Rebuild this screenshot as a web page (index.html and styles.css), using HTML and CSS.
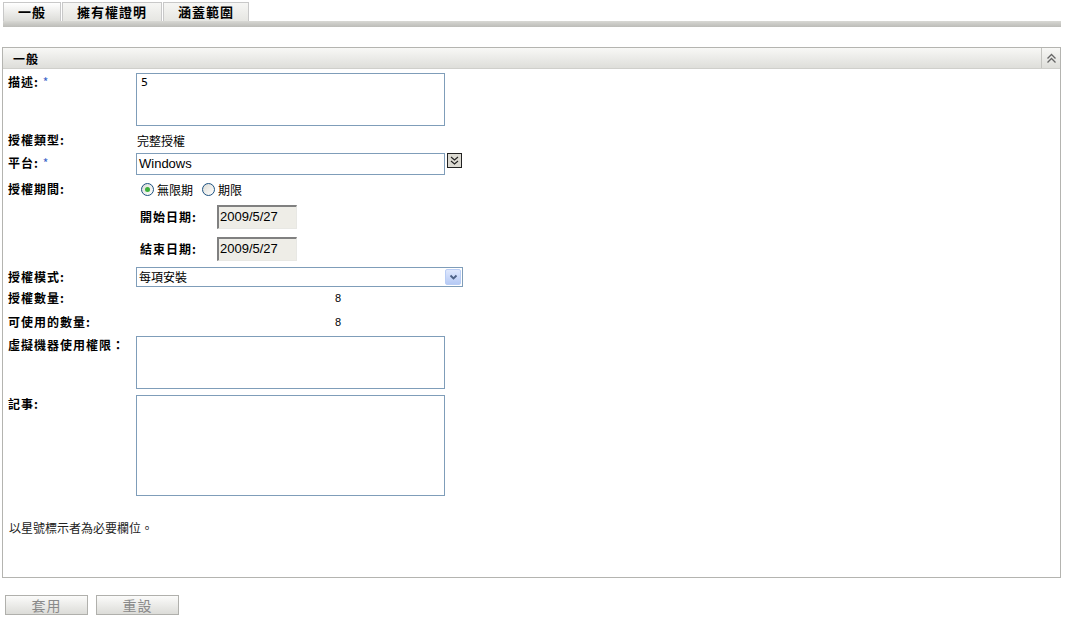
FILE: index.html
```html
<!DOCTYPE html>
<html>
<head>
<meta charset="utf-8">
<link rel="stylesheet" href="styles.css">
</head>
<body>
<div class="tabs">
  <div class="tab active t1">一般</div>
  <div class="tab t2">擁有權證明</div>
  <div class="tab t3">涵蓋範圍</div>
</div>
<div class="tabbar"></div>

<div class="panel">
  <div class="panel-head">
    <span class="panel-title">一般</span>
    <span class="collapse">
      <svg width="11" height="11" viewBox="0 0 11 11"><path d="M1.5 5.5 L5.5 1.5 L9.5 5.5 M1.5 9.5 L5.5 5.5 L9.5 9.5" fill="none" stroke="#666" stroke-width="1.3"/></svg>
    </span>
  </div>
  <div class="panel-body">
    <div class="row r-desc top">
      <div class="label">描述: <span class="req">*</span></div>
      <div class="textarea ta-small">5</div>
    </div>
    <div class="row r-type">
      <div class="label">授權類型:</div>
      <div class="value">完整授權</div>
    </div>
    <div class="row r-plat">
      <div class="label">平台: <span class="req">*</span></div>
      <div class="combo">Windows</div>
      <span class="combo-btn">
        <svg width="11" height="11" viewBox="0 0 11 11"><path d="M2 2 L5.5 5 L9 2 M2 6 L5.5 9 L9 6" fill="none" stroke="#222" stroke-width="1.1"/></svg>
      </span>
    </div>
    <div class="row r-period">
      <div class="label">授權期間:</div>
      <div class="radios">
        <span class="radio checked"></span><span class="rlabel">無限期</span>
        <span class="radio"></span><span class="rlabel">期限</span>
      </div>
    </div>
    <div class="row r-start">
      <div class="label sub">開始日期:</div>
      <div class="date">2009/5/27</div>
    </div>
    <div class="row r-end">
      <div class="label sub">結束日期:</div>
      <div class="date">2009/5/27</div>
    </div>
    <div class="row r-mode">
      <div class="label">授權模式:</div>
      <div class="select">
        <span class="select-text">每項安裝</span>
        <span class="select-btn">
          <svg width="9" height="7" viewBox="0 0 9 7"><path d="M1.5 1.5 L4.5 4.5 L7.5 1.5" fill="none" stroke="#4d6185" stroke-width="1.8"/></svg>
        </span>
      </div>
    </div>
    <div class="row r-qty">
      <div class="label">授權數量:</div>
      <div class="num">8</div>
    </div>
    <div class="row r-avail">
      <div class="label">可使用的數量:</div>
      <div class="num">8</div>
    </div>
    <div class="row r-vm top">
      <div class="label">虛擬機器使用權限：</div>
      <div class="textarea ta-small"></div>
    </div>
    <div class="row r-notes top">
      <div class="label lp2">記事:</div>
      <div class="textarea ta-big"></div>
    </div>
    <div class="note">以星號標示者為必要欄位。</div>
  </div>
</div>

<div class="buttons">
  <div class="btn">套用</div>
  <div class="btn">重設</div>
</div>
</body>
</html>
```

FILE: styles.css
```css
* { box-sizing: border-box; }
body {
  margin: 0;
  background: #fff;
  font-family: "Noto Sans CJK TC", "Liberation Sans", sans-serif;
  font-size: 12px;
  color: #000;
}
.tabs {
  display: flex;
  margin-left: 3px;
  padding-top: 2px;
  height: 21px;
}
.tab {
  height: 19px;
  border: 1px solid #c8c8c8;
  border-bottom: none;
  background: linear-gradient(#f6f6f4, #e6e6e2);
  font-weight: bold;
  font-size: 13px;
  line-height: 18px;
  text-align: center;
  letter-spacing: 1px;
  margin-right: 1px;
}
.tab.active {
  background: linear-gradient(#ffffff, #dcdcd8);
}
.t1 { width: 58px; }
.t2 { width: 100px; }
.t3 { width: 86px; }
.tabbar {
  margin-left: 3px;
  width: 1058px;
  height: 6px;
  background: linear-gradient(#d8d8d4, #bcbcb8);
}
.panel {
  margin: 20px 0 0 2px;
  width: 1059px;
  height: 531px;
  border: 1px solid #b4b4b0;
}
.panel-head {
  height: 21px;
  display: flex;
  align-items: center;
  background: linear-gradient(#f8f8f6, #dededa);
  border-bottom: 1px solid #cfcfcb;
}
.panel-title {
  flex: 1;
  padding-left: 10px;
  font-weight: bold;
  letter-spacing: 1px;
}
.collapse {
  width: 19px;
  height: 20px;
  border-left: 1px solid #c4c4c0;
  display: flex;
  align-items: center;
  justify-content: center;
}
.panel-body {
  padding: 4px 0 0 5px;
}
.row {
  display: flex;
  align-items: center;
}
.row.top { align-items: flex-start; }
.label {
  width: 128px;
  flex: none;
  font-weight: bold;
  letter-spacing: 1px;
  line-height: 16px;
  white-space: nowrap;
}
.row.top .label { padding-top: 1px; }
.label.lp2 { padding-top: 2px; }
.label.sub { margin-left: 132px; width: 77px; }
.req { color: #3a64c8; font-weight: normal; }
.textarea {
  width: 309px;
  border: 1px solid #7f9db9;
  font-family: "DejaVu Sans", "Liberation Sans", sans-serif;
  font-size: 11px;
  padding: 2px 4px;
  background: #fff;
}
.ta-small { height: 53px; }
.ta-big { height: 101px; }
.r-type { margin-top: 4px; height: 20px; }
.value { padding-left: 1px; }
.r-plat { margin-top: 3px; height: 22px; align-items: flex-start; }
.combo {
  width: 309px;
  height: 22px;
  border: 1px solid #7f9db9;
  font-family: "Liberation Sans", sans-serif;
  font-size: 13px;
  line-height: 20px;
  padding-left: 2px;
}
.r-plat .label { line-height: 20px; }
.combo-btn {
  margin-left: 2px;
  width: 15px;
  height: 15px;
  border: 1px solid #222;
  background: #dcdad2;
  display: flex;
  align-items: center;
  justify-content: center;
}
.r-period { margin-top: 3px; height: 22px; }
.radios { display: flex; align-items: center; padding-left: 5px; }
.radio {
  width: 13px;
  height: 13px;
  border-radius: 50%;
  border: 1px solid #1c5180;
  background: linear-gradient(135deg, #dcdcd6, #ffffff);
  display: inline-flex;
  align-items: center;
  justify-content: center;
}
.radio.checked::after {
  content: "";
  width: 5px;
  height: 5px;
  border-radius: 50%;
  background: #3cb03c;
}
.rlabel { margin: 0 9px 0 3px; }
.r-start { margin-top: 5px; height: 24px; }
.r-end { margin-top: 8px; height: 24px; }
.date {
  width: 80px;
  height: 24px;
  background: #eeede7;
  border-top: 2px solid #808080;
  border-left: 2px solid #808080;
  border-right: 1px solid #e8e8e4;
  border-bottom: 1px solid #e8e8e4;
  font-family: "Liberation Sans", sans-serif;
  font-size: 13px;
  line-height: 20px;
  padding-left: 1px;
}
.r-mode { margin-top: 6px; height: 20px; }
.select {
  width: 327px;
  height: 20px;
  border: 1px solid #7f9db9;
  display: flex;
  align-items: center;
  padding: 1px;
}
.select-text { flex: 1; padding-left: 1px; line-height: 16px; }
.select-btn {
  width: 16px;
  height: 16px;
  border: 1px solid #b9cdf5;
  border-radius: 2px;
  background: linear-gradient(#dfe8fd, #b6caf5);
  display: flex;
  align-items: center;
  justify-content: center;
}
.r-qty { margin-top: 3px; height: 16px; }
.r-avail { margin-top: 8px; height: 16px; }
.num {
  padding-left: 199px;
  font-family: "Liberation Sans", sans-serif;
  font-size: 11px;
}
.r-vm { margin-top: 6px; }
.r-notes { margin-top: 6px; }
.note {
  margin-top: 24px;
  line-height: 16px;
  padding-left: 1px;
  color: #222;
}
.buttons {
  display: flex;
  gap: 8px;
  margin: 17px 0 0 5px;
}
.btn {
  width: 83px;
  height: 20px;
  border: 1px solid #b0b0ac;
  background: linear-gradient(#fbfbfa, #dcdcd8);
  color: #8a8a8a;
  font-size: 14px;
  line-height: 18px;
  text-align: center;
  letter-spacing: 1px;
}
```
